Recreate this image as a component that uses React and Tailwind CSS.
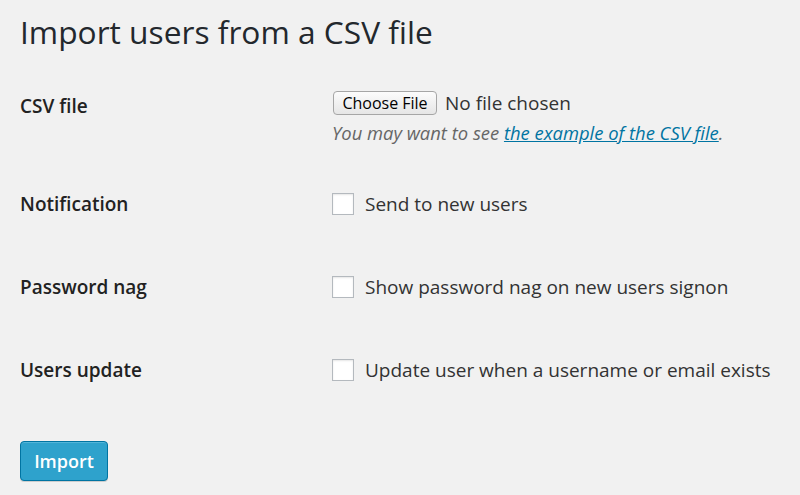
import React from "react";

function Checkbox() {
  return (
    <span className="inline-block w-[22px] h-[22px] bg-white border border-[#b4b9be] shadow-[inset_0_1px_2px_rgba(0,0,0,0.1)] shrink-0" />
  );
}

function CheckRow({ label, text, className }) {
  return (
    <div className={"flex items-center h-[28px] " + className}>
      <div className="w-[312px] shrink-0 text-[19px] font-semibold text-[#222]">{label}</div>
      <div className="flex items-center gap-[11px]">
        <Checkbox />
        <span className="text-[19px] text-[#333]">{text}</span>
      </div>
    </div>
  );
}

export default function App() {
  return (
    <div
      className="w-[800px] h-[495px] bg-[#f1f1f1] overflow-hidden px-[20px]"
      style={{ fontFamily: '"Open Sans", sans-serif' }}
    >
      <h1 className="text-[31.7px] leading-[40px] text-[#23282d] font-normal pt-[12px]">
        Import users from a CSV file
      </h1>

      <div className="mt-[37px] flex items-start">
        <div className="w-[312px] shrink-0 text-[19px] font-semibold text-[#222] leading-[28px] pt-[3px]">
          CSV file
        </div>
        <div className="flex flex-col">
          <div className="flex items-center gap-[8px]">
            <button className="h-[24px] w-[104px] text-[16px] leading-[20px] text-black bg-gradient-to-b from-[#fcfcfc] to-[#e6e6e6] border border-[#a6a6a6] rounded-[4px] ml-[1px]">
              Choose File
            </button>
            <span className="text-[19px] text-[#333]">No file chosen</span>
          </div>
          <div className="mt-[1px] text-[18.4px] italic text-[#666]">
            You may want to see{" "}
            <a href="#" className="text-[#0074a2] underline">
              the example of the CSV file
            </a>
            .
          </div>
        </div>
      </div>

      <CheckRow className="mt-[44px]" label="Notification" text="Send to new users" />
      <CheckRow className="mt-[55px]" label="Password nag" text="Show password nag on new users signon" />
      <CheckRow className="mt-[55px]" label="Users update" text="Update user when a username or email exists" />

      <button className="mt-[57px] w-[88px] h-[40px] bg-[#2ea2cc] border border-[#0074a2] rounded-[4px] text-white text-[18px] font-semibold shadow-[inset_0_1px_0_rgba(120,200,230,0.5),0_1px_0_rgba(0,0,0,0.15)]">
        Import
      </button>
    </div>
  );
}
